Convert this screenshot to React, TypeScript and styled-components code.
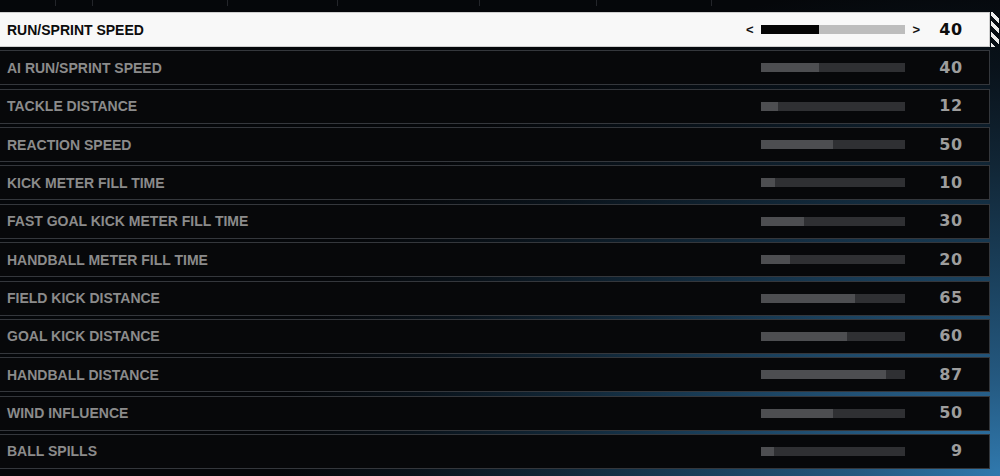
import React from "react";
import styled, { createGlobalStyle, css } from "styled-components";

const Global = createGlobalStyle`
  html, body {
    margin: 0;
    padding: 0;
    width: 1000px;
    height: 476px;
    overflow: hidden;
    background: #05070a;
  }
  #root { width: 1000px; height: 476px; }
`;

const Screen = styled.div`
  width: 1000px;
  height: 476px;
  overflow: hidden;
  background:
    radial-gradient(720px 500px at 100% 100%, #3079ae 0%, #24587f 20%, #1a405c 40%, #112636 62%, #09121a 82%, #05070a 100%),
    #05070a;
  font-family: "Liberation Sans", Arial, sans-serif;
  display: flex;
  flex-direction: column;
`;

const TickStrip = styled.div`
  height: 12px;
  display: flex;
  align-items: flex-start;
`;

const Tick = styled.div<{ $w: number }>`
  width: ${(p) => p.$w}px;
  height: 6px;
  flex: none;
  border-right: 1px solid rgba(190, 200, 210, 0.16);
  box-sizing: border-box;
`;

const List = styled.div`
  width: 990px;
  display: flex;
  flex-direction: column;
  gap: 3.36px;
`;

const Row = styled.div<{ $sel?: boolean }>`
  position: relative;
  height: 35px;
  box-sizing: border-box;
  display: grid;
  grid-template-columns: 1fr 15px 144px 15px 43px;
  align-items: center;
  padding: 0 26px 0 7px;
  border: 1px solid #34373c;
  border-left: none;
  background: #07080a;
  ${(p) =>
    p.$sel &&
    css`
      background: #f8f8f8;
      border-color: #cfcfcf;
      &::after {
        content: "";
        position: absolute;
        top: -1px;
        bottom: -1px;
        right: -10px;
        width: 8px;
        background: repeating-linear-gradient(
          45deg,
          #ececec 0px,
          #ececec 3.5px,
          transparent 3.5px,
          transparent 7.5px
        );
      }
    `}
`;

const Label = styled.div<{ $sel?: boolean }>`
  font-size: 14px;
  font-weight: 700;
  color: ${(p) => (p.$sel ? "#0c0c0c" : "#8b8b8b")};
  white-space: nowrap;
`;

const Arrow = styled.div<{ $side: "l" | "r" }>`
  font-size: 13px;
  font-weight: 700;
  color: #111;
  text-align: ${(p) => (p.$side === "l" ? "left" : "right")};
  line-height: 1;
`;

const Track = styled.div<{ $sel?: boolean }>`
  height: 9px;
  background: ${(p) => (p.$sel ? "#bdbdbd" : "#2f3033")};
  display: flex;
`;

const Fill = styled.div<{ $sel?: boolean }>`
  height: 100%;
  background: ${(p) => (p.$sel ? "#050505" : "#4d4e51")};
`;

const Value = styled.div<{ $sel?: boolean }>`
  font-family: "DejaVu Sans", "Liberation Sans", sans-serif;
  font-size: 16px;
  font-weight: 700;
  letter-spacing: 0.8px;
  text-align: right;
  color: ${(p) => (p.$sel ? "#0c0c0c" : "#9d9d9d")};
  line-height: 1;
`;

const settings: [string, number][] = [
  ["RUN/SPRINT SPEED", 40],
  ["AI RUN/SPRINT SPEED", 40],
  ["TACKLE DISTANCE", 12],
  ["REACTION SPEED", 50],
  ["KICK METER FILL TIME", 10],
  ["FAST GOAL KICK METER FILL TIME", 30],
  ["HANDBALL METER FILL TIME", 20],
  ["FIELD KICK DISTANCE", 65],
  ["GOAL KICK DISTANCE", 60],
  ["HANDBALL DISTANCE", 87],
  ["WIND INFLUENCE", 50],
  ["BALL SPILLS", 9],
];

const ticks = [56, 37, 135, 110, 142, 117, 115];

export default function App() {
  return (
    <>
      <Global />
      <Screen>
        <TickStrip>
          {ticks.map((w, i) => (
            <Tick key={i} $w={w} />
          ))}
        </TickStrip>
        <List>
          {settings.map(([name, v], i) => {
            const sel = i === 0;
            return (
              <Row key={name} $sel={sel}>
                <Label $sel={sel}>{name}</Label>
                <Arrow $side="l">{sel ? "<" : ""}</Arrow>
                <Track $sel={sel}>
                  <Fill $sel={sel} style={{ width: `${v}%` }} />
                </Track>
                <Arrow $side="r">{sel ? ">" : ""}</Arrow>
                <Value $sel={sel}>{v}</Value>
              </Row>
            );
          })}
        </List>
      </Screen>
    </>
  );
}
